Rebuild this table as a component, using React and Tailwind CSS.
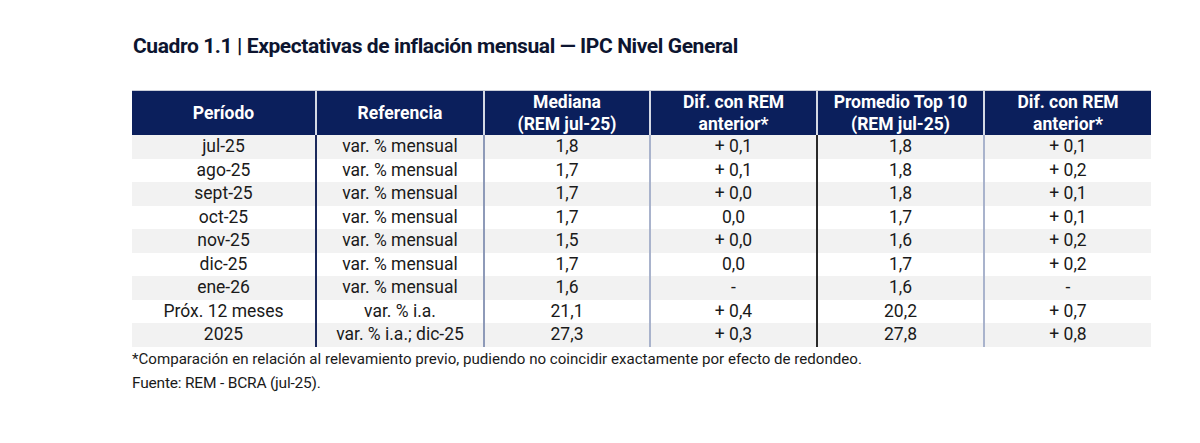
import React from "react";

const rows = [
  ["jul-25", "var. % mensual", "1,8", "+ 0,1", "1,8", "+ 0,1"],
  ["ago-25", "var. % mensual", "1,7", "+ 0,1", "1,8", "+ 0,2"],
  ["sept-25", "var. % mensual", "1,7", "+ 0,0", "1,8", "+ 0,1"],
  ["oct-25", "var. % mensual", "1,7", "0,0", "1,7", "+ 0,1"],
  ["nov-25", "var. % mensual", "1,5", "+ 0,0", "1,6", "+ 0,2"],
  ["dic-25", "var. % mensual", "1,7", "0,0", "1,7", "+ 0,2"],
  ["ene-26", "var. % mensual", "1,6", "-", "1,6", "-"],
  ["Próx. 12 meses", "var. % i.a.", "21,1", "+ 0,4", "20,2", "+ 0,7"],
  ["2025", "var. % i.a.; dic-25", "27,3", "+ 0,3", "27,8", "+ 0,8"],
];

const bodyBorders = [
  "border-r-2 border-[#1c2a5c]",
  "border-r-2 border-[#8e9ab8]",
  "border-r-2 border-[#a9b3cc]",
  "border-r-2 border-[#2a2a2a]",
  "border-r-2 border-[#a9b3cc]",
  "",
];

const headers = [
  ["Período"],
  ["Referencia"],
  ["Mediana", "(REM jul-25)"],
  ["Dif. con REM", "anterior*"],
  ["Promedio Top 10", "(REM jul-25)"],
  ["Dif. con REM", "anterior*"],
];

export default function App() {
  return (
    <div
      className="w-[1200px] h-[443px] bg-white relative overflow-hidden"
      style={{ fontFamily: "Roboto, 'Liberation Sans', sans-serif" }}
    >
      <div className="pl-[133px] pt-[33px]">
        <h1 className="text-[21px] leading-[26px] font-bold text-[#0d1530] tracking-[-0.4px]">
          Cuadro 1.1 | Expectativas de inflación mensual — IPC Nivel General
        </h1>
      </div>
      <div className="ml-[132px] mt-[31px] w-[1019px]">
        <div className="grid grid-cols-[185px_168px_166px_167px_167px_166px] bg-[#0b1f5c] h-[45px] border-t border-[#c9cdd8]">
          {headers.map((h, i) => (
            <div
              key={i}
              className={`flex flex-col items-center justify-center text-white font-bold text-[17.5px] leading-[22px] ${
                i < 5 ? "border-r-2 border-[#d4d8e4]" : ""
              }`}
            >
              {h.map((l, j) => (
                <span key={j}>{l}</span>
              ))}
            </div>
          ))}
        </div>
        {rows.map((r, ri) => (
          <div
            key={ri}
            className={`grid grid-cols-[185px_168px_166px_167px_167px_166px] ${
              ri % 2 === 0 ? "bg-[#f2f2f2] h-[24px]" : "bg-white h-[23px]"
            }`}
          >
            {r.map((c, ci) => (
              <div
                key={ci}
                className={`flex items-center justify-center text-[17.5px] text-[#1a1a1a] leading-none ${bodyBorders[ci]}`}
              >
                {c}
              </div>
            ))}
          </div>
        ))}
        <p className="mt-[2px] text-[15.1px] leading-[20px] text-[#1a1a1a]">
          *Comparación en relación al relevamiento previo, pudiendo no coincidir exactamente por efecto de redondeo.
        </p>
        <p className="mt-[5px] text-[15.5px] leading-[18px] text-[#1a1a1a] tracking-[-0.2px]">
          Fuente: REM - BCRA (jul-25).
        </p>
      </div>
    </div>
  );
}
